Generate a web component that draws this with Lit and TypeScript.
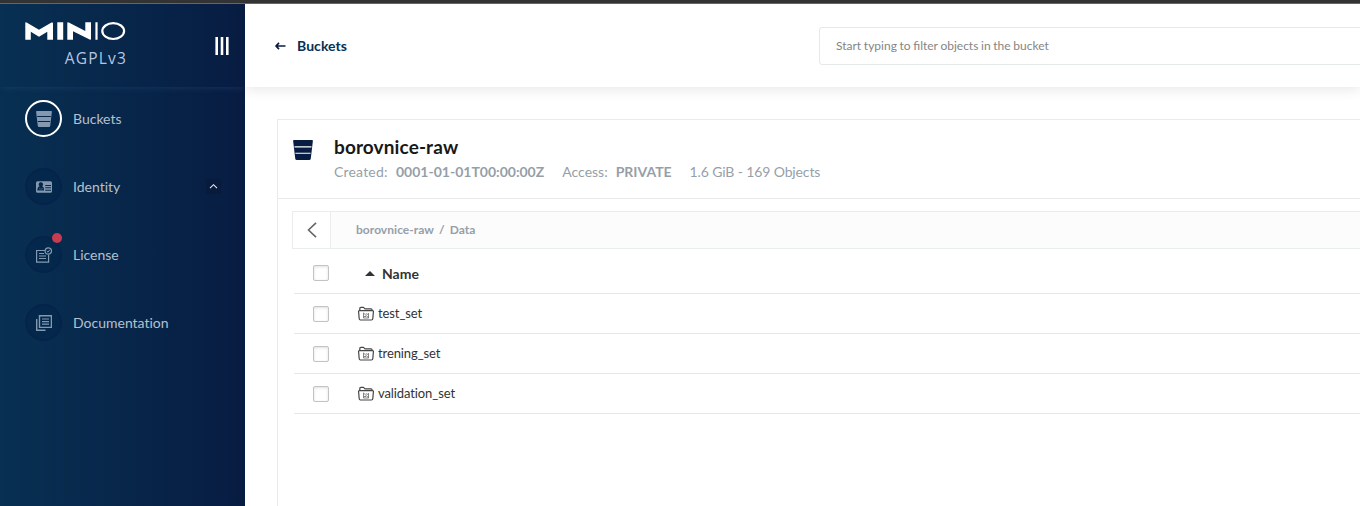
import { LitElement, html, css, svg } from "lit";
import { customElement } from "lit/decorators.js";

const bucket = svg`<path d="M.8 0H15.200Q16 0 15.900.8L14.200 15Q14 16 13 16H3Q2 16 1.800 15L.1.8Q0 0 .8 0ZM1.200 5V5.900H14.800V5ZM1.900 10.100V11H14.100V10.100Z" fill="currentColor" fill-rule="evenodd"/>`;

const identity = svg`<path fill="currentColor" fill-rule="evenodd" d="M1.5 2.3H14.5Q16 2.3 16 3.8V12.3Q16 13.8 14.5 13.8H1.5Q0 13.8 0 12.3V3.8Q0 2.3 1.5 2.3ZM5 3.3A2.2 2.2 0 0 0 3.6 7.3Q1.4 8 1.4 10.2V11.6H8V10.2Q8 8 6.2 7.3A2.200 2.200 0 0 0 5 3.3ZM9.2 6V7H15V6ZM9.2 8.3V9.3H15V8.3ZM9.2 10.7V11.7H15V10.7Z"/><path fill="currentColor" d="M3.6 9L5 10.200 6.400 9V10.300H3.600Z"/>`;

const license = svg`<g fill="none" stroke="currentColor"><path d="M9 3.5H.6V15.2H12.6V8" stroke-width="1.2"/><path d="M3 6.5H8M3 9H10M3 11.5H10" stroke-width="1.2"/><circle cx="12.3" cy="4" r="3.2" stroke-width="1.2"/><path d="M10.8 4L12 5.2 13.8 2.8"/></g>`;

const docs = svg`<g fill="none" stroke="currentColor"><path d="M3.5.7H15.4V12.4H3.5Z" stroke-width="1.4"/><path d="M.7 4V15.3H9.5" stroke-width="1.4"/><path d="M6 4H13M6 6.6H13M6 9.2H13" stroke-width="1.2"/></g>`;

const folder = svg`<g fill="none" stroke="#444" stroke-width="1.2" stroke-linejoin="round"><path d="M1.800 4.500V2.600Q1.800 1.400 3 1.400H5.500L7 2.900H12.800Q14.200 2.900 14.200 4.500"/><path d="M1.500 4.600H14.500Q15.500 4.600 15.400 5.700L14.800 12.800Q14.700 14 13.500 14H2.500Q1.300 14 1.200 12.800L.6 5.700Q.5 4.600 1.500 4.600Z"/><path d="M5.300 6.800L10.500 11.700M5.500 7V12H10.500V7M7.800 7.500L10 8.500M6 10.500H8" stroke="#666" stroke-width=".8"/></g>`;

const NAV = [
  { label: "Buckets", icon: bucket, active: true },
  { label: "Identity", icon: identity, expandable: true },
  { label: "License", icon: license, alert: true },
  { label: "Documentation", icon: docs },
];

@customElement("app-root")
export class AppRoot extends LitElement {
  static styles = css`
    :host {
      display: flex;
      flex-direction: column;
      width: 100%;
      height: 506px;
      overflow: hidden;
      background: #fff;
      font-family: Lato, sans-serif;
      color: #333;
    }
    * { box-sizing: border-box; }
    svg { display: block; flex: none; }
    .chrome { height: 4px; flex: none; background: #333; border-bottom: 1px solid #666; }
    .layout { display: flex; flex: 1; min-height: 0; }
    .sidebar {
      width: 245px;
      flex: none;
      overflow: hidden;
      background: linear-gradient(90deg, #073052 0%, #081c42 100%);
      color: #b5c0ce;
    }
    .brand {
      height: 83px;
      display: flex;
      justify-content: space-between;
      padding: 18px 16px 0 25px;
      box-shadow: 0 3px 6px -2px rgba(40, 80, 125, .4);
    }
    .logo { width: 102px; }
    .edition {
      margin-top: 8px;
      font: 400 15.5px/19px "Open Sans", sans-serif;
      letter-spacing: 1.2px;
      text-align: right;
      color: #b4c7e2;
    }
    .toggle { margin-top: 15px; }
    nav { padding-top: 13px; font-variant-ligatures: none; }
    .item { height: 37px; margin-bottom: 31px; padding: 0 24px 0 25px; display: flex; align-items: center; font-size: 14px; }
    .ring {
      position: relative;
      width: 37px;
      height: 37px;
      margin-right: 11px;
      border-radius: 50%;
      border: 2px solid #06234a;
      background: #04284c;
      display: grid;
      place-items: center;
      color: #8499b0;
    }
    .ring.active { border-color: #fff; }
    .dot { position: absolute; top: -5px; right: -2px; width: 10px; height: 10px; border-radius: 50%; background: #c83b51; }
    .expand { width: 15px; height: 15px; margin-left: auto; border-radius: 2px; background: #081b3c; display: grid; place-items: center; }
    .main { flex: 1; min-width: 0; overflow: hidden; display: flex; flex-direction: column; }
    header {
      height: 83px;
      flex: none;
      display: flex;
      align-items: center;
      padding-left: 30px;
      box-shadow: 0 3px 12px rgba(0, 0, 0, .09);
    }
    .back { flex: none; width: 544px; display: flex; align-items: center; gap: 11px; font-size: 14px; font-weight: 700; color: #073052; letter-spacing: .05px; }
    .search {
      flex: none;
      width: 560px;
      height: 38px;
      border: 1px solid #e5e9e9;
      border-radius: 3px;
      padding-left: 16px;
      line-height: 36px;
      font-size: 12px;
      word-spacing: -.4px;
      color: #858585;
    }
    .panel { flex: 1; width: 1100px; margin: 32px 0 0 32px; border: 1px solid #eaeaea; border-bottom: 0; }
    .title { height: 79px; display: flex; padding: 20px 0 0 15px; border-bottom: 1px solid #eaeaea; }
    h1 { margin: -5px 0 0; font-size: 19px; line-height: 24px; letter-spacing: .12px; color: #181818; font-weight: 700; }
    .meta { display: flex; margin-top: 3px; font-size: 14px; line-height: 20px; color: #969fa8; white-space: pre; }
    .meta b { margin: 0 18px 0 8px; }
    .created { width: 54px; letter-spacing: .2px; }
    .size { letter-spacing: -.13px; }
    .text { margin-left: 21px; }
    .crumbs { height: 38px; margin: 12px 0 0 14px; display: flex; border: 1px solid #eaeded; background: #fcfcfc; font-size: 12px; font-weight: 700; line-height: 36px; color: #969fa8; }
    .trail { display: flex; gap: 5px; letter-spacing: .04px; }
    .up { width: 38px; margin-right: 25px; border-right: 1px solid #eaeded; background: #fff; display: grid; place-items: center; }
    .row { height: 40px; margin-left: 16px; padding-left: 19px; display: flex; align-items: center; border-bottom: 1px solid #e8e8e8; font-size: 13px; letter-spacing: -.1px; }
    .name { padding-bottom: 2px; }
    .row.head { height: 45px; padding-top: 4px; font-size: 14px; font-weight: 700; letter-spacing: 0; }
    .check { width: 16px; height: 16px; border: 1px solid #c3c3c3; border-radius: 2px; box-shadow: inset 0 1px 3px rgba(0, 0, 0, .12); }
    .sort { margin: 0 7px 0 36px; }
    .folder { margin: 0 4px 0 29px; }
  `;

  render() {
    return html`
      <div class="chrome"></div>
      <div class="layout">
        <aside class="sidebar">
          <div class="brand">
            <div class="logo">
              <svg width="102" height="19" viewBox="0 0 102 19">
                <path fill="#fff" d="M.3 17.800V1.200Q.3-.2 1.600.6L14 7.800 26.500.6Q28 0 28 1.300V17.800H22.300V9.800L14 14.800 5.800 9.800V17.800ZM32.300.3H38.200V17.800H32.300ZM42.300 17.800V1.200Q42.300-.2 43.800.6L60.300 9V.3H66V16.800Q66 18.200 64.600 17.500L48 9.300V17.800ZM70.400.3H72.600V17.800H70.400Z"/>
                <ellipse cx="88.200" cy="9.100" rx="10.900" ry="7.900" fill="none" stroke="#fff" stroke-width="2.200"/>
              </svg>
              <div class="edition">AGPLv3</div>
            </div>
            <svg class="toggle" width="14" height="18" viewBox="0 0 14 18"><path fill="#fff" d="M.4 0H3V18H.4ZM5.700 0H8.300V18H5.700ZM11 0H13.600V18H11Z"/></svg>
          </div>
          <nav>
            ${NAV.map((n) => html`
              <div class="item">
                <span class="ring ${n.active ? "active" : ""}">
                  <svg width="16" height="16" viewBox="0 0 16 16">${n.icon}</svg>
                  ${n.alert ? html`<i class="dot"></i>` : ""}
                </span>
                <span>${n.label}</span>
                ${n.expandable ? html`<span class="expand"><svg width="9" height="7" viewBox="0 0 9 7"><path d="M1 5.200L4.500 1.700 8 5.200" fill="none" stroke="#e8ebf0" stroke-width="1.100"/></svg></span>` : ""}
              </div>`)}
          </nav>
        </aside>
        <div class="main">
          <header>
            <div class="back">
              <svg width="11" height="8" viewBox="0 0 11 8"><path d="M4 .8L1 4 4 7.200M1 4H10.500" fill="none" stroke="#081c42" stroke-width="1.700" stroke-linejoin="round"/></svg>
              <span>Buckets</span>
            </div>
            <div class="search">Start typing to filter objects in the bucket</div>
          </header>
          <section class="panel">
            <div class="title">
              <svg width="20" height="20" viewBox="0 0 16 16" color="#081c42">${bucket}</svg>
              <div class="text">
                <h1>borovnice-raw</h1>
                <div class="meta"><span class="created">Created:</span><b>0001-01-01T00:00:00Z</b><span>Access:</span><b>PRIVATE</b><span class="size">1.6 GiB - 169 Objects</span></div>
              </div>
            </div>
            <div class="crumbs">
              <span class="up"><svg width="10" height="16" viewBox="0 0 10 16"><path d="M9 .8L1.500 8 9 15.200" fill="none" stroke="#666" stroke-width="1.600"/></svg></span>
              <span class="trail"><span>borovnice-raw</span><span>/</span><span>Data</span></span>
            </div>
            <div class="row head">
              <span class="check"></span>
              <svg class="sort" width="10" height="5" viewBox="0 0 10 5"><path d="M0 5L5 0 10 5Z" fill="#333"/></svg>
              <span>Name</span>
            </div>
            ${["test_set", "trening_set", "validation_set"].map((f) => html`
              <div class="row">
                <span class="check"></span>
                <svg class="folder" width="16" height="16" viewBox="0 0 16 16">${folder}</svg>
                <span class="name">${f}</span>
              </div>`)}
          </section>
        </div>
      </div>`;
  }
}
